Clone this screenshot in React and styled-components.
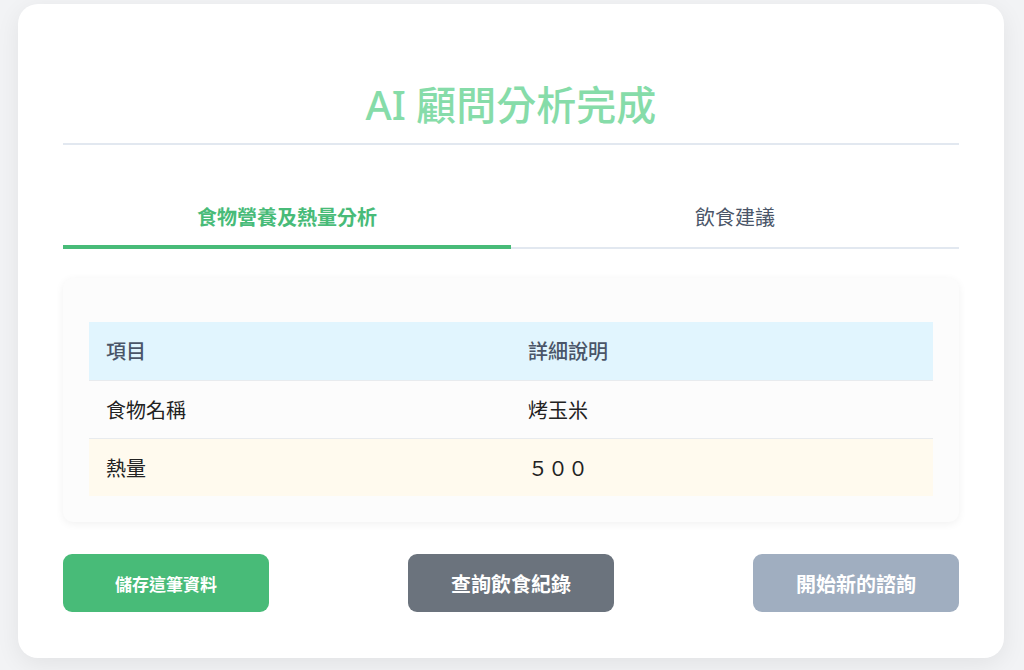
import React, { useState } from "react";
import styled, { createGlobalStyle } from "styled-components";

const Global = createGlobalStyle`
  html, body { margin: 0; padding: 0; background: #f2f3f5; }
  body { font-family: "Noto Sans", "Noto Sans CJK TC", sans-serif; }
  * { box-sizing: border-box; }
`;

const Page = styled.div`
  padding: 4px 20px 12px 18px;
`;

const Card = styled.div`
  width: 986px;
  background: #ffffff;
  border-radius: 20px;
  box-shadow: 0 6px 24px rgba(0, 0, 0, 0.07);
  padding: 45px 45px 46px;
`;

const Title = styled.h1`
  margin: 34px 0 0;
  padding-bottom: 16px;
  border-bottom: 2px solid #e2e8f0;
  text-align: center;
  font-size: 40px;
  line-height: 44px;
  font-weight: 500;
  color: #86dca9;
  font-family: "Noto Sans", "Noto Sans CJK TC", sans-serif;
`;

const Tabs = styled.div`
  display: flex;
  margin-top: 44px;
  border-bottom: 2px solid #e2e8f0;
`;

const Tab = styled.button`
  flex: 1;
  background: none;
  border: none;
  border-bottom: 4px solid ${(p) => (p.$active ? "#48bb78" : "transparent")};
  margin-bottom: -2px;
  padding: 14px 0 14px;
  font-family: "Noto Sans CJK TC", sans-serif;
  font-size: 20px;
  line-height: 28px;
  font-weight: ${(p) => (p.$active ? 700 : 400)};
  color: ${(p) => (p.$active ? "#48bb78" : "#4a5568")};
  cursor: pointer;
`;

const Panel = styled.div`
  margin-top: 29px;
  background: #fcfcfc;
  border-radius: 10px;
  box-shadow: 0 2px 8px rgba(0, 0, 0, 0.06);
  padding: 44px 26px 26px;
`;

const Table = styled.table`
  width: 100%;
  border-collapse: collapse;
  font-family: "Noto Sans CJK TC", sans-serif;
  font-size: 20px;
`;

const Row = styled.tr`
  background: ${(p) => p.$bg || "transparent"};
  border-bottom: ${(p) => (p.$last ? "none" : "1px solid #e8ebee")};
`;

const Cell = styled.td`
  height: 58px;
  padding: 0 17px;
  color: ${(p) => (p.$head ? "#4a5568" : "#222")};
  font-weight: ${(p) => (p.$head ? 500 : 400)};
  width: ${(p) => p.$w || "auto"};
  vertical-align: middle;
`;

const Actions = styled.div`
  margin-top: 32px;
  display: flex;
  justify-content: space-between;
`;

const Button = styled.button`
  width: 206px;
  height: 58px;
  border: none;
  border-radius: 9px;
  background: ${(p) => p.$bg};
  color: #ffffff;
  font-family: "Noto Sans CJK TC", sans-serif;
  font-size: ${(p) => p.$size || "20px"};
  font-weight: 700;
  cursor: pointer;
`;

export default function App() {
  const [tab, setTab] = useState(0);
  return (
    <>
      <Global />
      <Page>
        <Card>
          <Title>AI 顧問分析完成</Title>
          <Tabs>
            <Tab $active={tab === 0} onClick={() => setTab(0)}>
              食物營養及熱量分析
            </Tab>
            <Tab $active={tab === 1} onClick={() => setTab(1)}>
              飲食建議
            </Tab>
          </Tabs>
          <Panel>
            <Table>
              <tbody>
                <Row $bg="#e1f5fe">
                  <Cell $head $w="50%">項目</Cell>
                  <Cell $head>詳細說明</Cell>
                </Row>
                <Row>
                  <Cell>食物名稱</Cell>
                  <Cell>烤玉米</Cell>
                </Row>
                <Row $bg="#fffaee" $last>
                  <Cell>熱量</Cell>
                  <Cell>５００</Cell>
                </Row>
              </tbody>
            </Table>
          </Panel>
          <Actions>
            <Button $bg="#48bb78" $size="17px">儲存這筆資料</Button>
            <Button $bg="#6b737d">查詢飲食紀錄</Button>
            <Button $bg="#a0aec0">開始新的諮詢</Button>
          </Actions>
        </Card>
      </Page>
    </>
  );
}
